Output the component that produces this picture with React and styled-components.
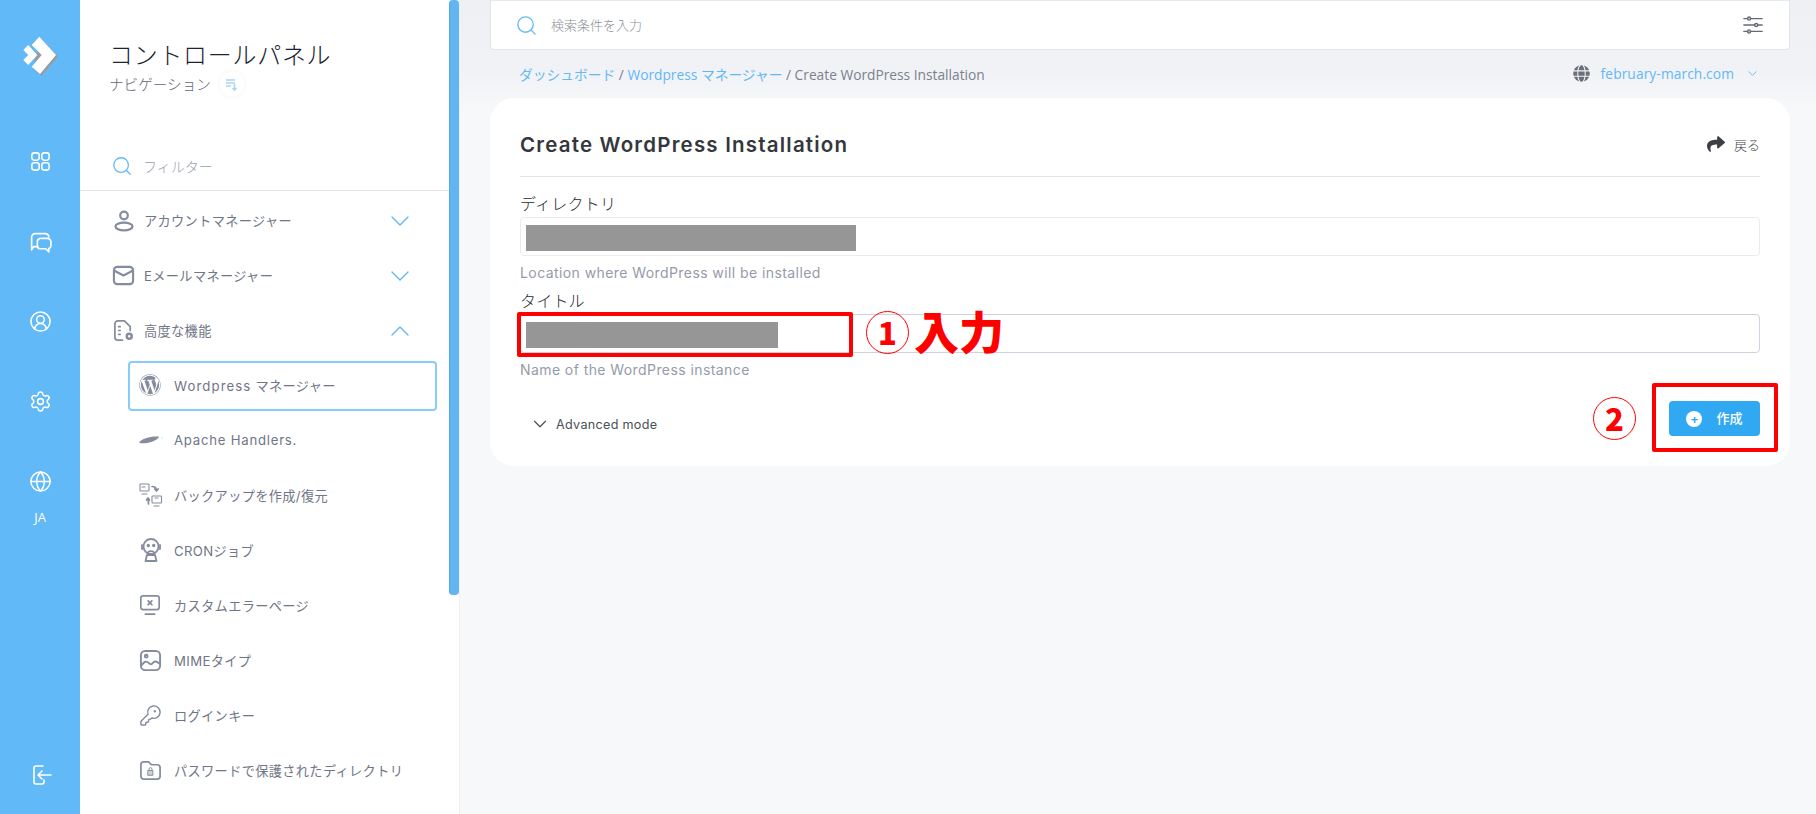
import React from "react";
import styled, { createGlobalStyle } from "styled-components";
import { FaWordpress, FaShare, FaGlobe } from "react-icons/fa";
import { ChevronDown, ChevronUp, Search, CircleUserRound, Settings, Globe, KeyRound } from "lucide-react";

const JP = `"Noto Sans CJK JP", sans-serif`;
const SANS = `Inter, "Noto Sans CJK JP", sans-serif`;
const OPEN = `"Open Sans", "Noto Sans CJK JP", sans-serif`;

const GlobalStyle = createGlobalStyle`
  html, body {
    margin: 0;
    height: 100%;
    background: #f7f8fa;
    overflow: hidden;
  }
  * { box-sizing: border-box; }
`;

const Page = styled.div`
  display: flex;
  width: 1816px;
  height: 814px;
  overflow: hidden;
`;

const Rail = styled.nav`
  width: 80px;
  flex-shrink: 0;
  background: #61b9f7;
  color: #fff;
  display: flex;
  flex-direction: column;
  align-items: center;
  padding-top: 34px;
`;

const RailLogo = styled.div`
  height: 93px;
`;

const RailItem = styled.div`
  height: 80px;
  display: flex;
  flex-direction: column;
  align-items: center;
  padding-top: 23px;
  gap: 15px;
`;

const RailLang = styled.span`
  font: 500 13px ${OPEN};
  line-height: 18px;
`;

const RailBottom = styled.div`
  margin-top: auto;
  padding: 0 0 23px 2px;
`;

const Sidebar = styled.aside`
  position: relative;
  width: 380px;
  flex-shrink: 0;
  background: #fff;
  border-right: 1px solid #eef0f3;
  overflow: hidden;
`;

const ScrollThumb = styled.div`
  position: absolute;
  top: 0;
  right: 0;
  width: 10px;
  height: 595px;
  background: #61b5f0;
  border-left: 1px solid #58a8e0;
  border-radius: 4px;
`;

const SideHead = styled.header`
  padding: 37px 0 0 29px;
  height: 142px;
`;

const SideTitle = styled.h1`
  margin: 0;
  font: 300 24px/34px ${JP};
  color: #1c2433;
  letter-spacing: 0.7px;
`;

const SideSub = styled.div`
  display: flex;
  align-items: center;
  gap: 8px;
  font: 300 14.6px/24px ${JP};
  color: #5f6673;
`;

const SubBadge = styled.span`
  width: 26px;
  height: 26px;
  border-radius: 50%;
  box-shadow: 0 0 3px rgba(120, 130, 150, 0.12);
  display: flex;
  align-items: center;
  justify-content: center;
`;

const Filter = styled.div`
  height: 49px;
  margin-right: 10px;
  padding-left: 31px;
  display: flex;
  align-items: center;
  gap: 10px;
  border-bottom: 1px solid #dfe5ec;
  color: #9aa0ad;
  font: 300 14px ${JP};
`;

const NavList = styled.ul`
  list-style: none;
  margin: 0;
  padding: 2px 0 0;
`;

const NavRow = styled.li`
  height: 55px;
  display: flex;
  align-items: center;
  padding-left: ${(p) => (p.$sub ? "59px" : "32px")};
  padding-right: 43px;
  padding-bottom: ${(p) => (p.$sub ? "1px" : "0")};
  font: 400 13.2px ${SANS};
  letter-spacing: 0.35px;
  color: #6f7686;
  position: relative;
`;

const NavIcon = styled.span`
  width: ${(p) => (p.$sub ? "35px" : "32px")};
  flex-shrink: 0;
  display: flex;
  align-items: center;
  color: #858c9f;
`;

const NavText = styled.span`
  flex: 1;
  white-space: nowrap;
`;

const WideLatin = styled.span`
  letter-spacing: ${(p) => p.$s}px;
`;

const ActiveBox = styled.div`
  position: absolute;
  left: 48px;
  right: 22px;
  top: 3px;
  bottom: 2px;
  border: 2px solid #88cdf9;
  border-radius: 4px;
`;

const Main = styled.main`
  flex: 1;
  padding: 0 26px 0 30px;
  background: linear-gradient(#eff0f3 0, #f1f2f5 70px, #f7f8fa 110px);
`;

const SearchBar = styled.div`
  height: 50px;
  background: #fff;
  border: 1px solid #dfe5ed;
  border-top-color: #e6ebf1;
  border-radius: 0 0 4px 4px;
  display: flex;
  align-items: center;
  padding: 0 25px 0 24px;
  gap: 13px;
`;

const SearchText = styled.span`
  flex: 1;
  padding-bottom: 2px;
  font: 300 13px ${JP};
  color: #8b8f98;
`;

const CrumbRow = styled.div`
  height: 47px;
  margin-bottom: 1px;
  padding: 0 30px 0 29px;
  display: flex;
  align-items: center;
  justify-content: space-between;
  font: 400 13.75px ${OPEN};
  color: #7b818d;
`;

const CrumbLink = styled.span`
  color: #63b8f5;
`;

const DomainPick = styled.div`
  display: flex;
  align-items: center;
  gap: 11px;
  color: #6a6f78;
`;

const DomainName = styled.span`
  color: #63b8f5;
  letter-spacing: 0.1px;
`;

const Card = styled.section`
  position: relative;
  background: #fff;
  border-radius: 24px;
  height: 368px;
  padding: 0 30px;
`;

const CardHead = styled.div`
  height: 79px;
  display: flex;
  align-items: center;
  justify-content: space-between;
  border-bottom: 1px solid #dfe5ec;
  padding-top: 14px;
`;

const CardTitle = styled.h2`
  margin: 0;
  font: 600 20.5px ${SANS};
  letter-spacing: 1.2px;
  color: #34373d;
`;

const BackLink = styled.div`
  display: flex;
  align-items: center;
  gap: 9px;
  font: 300 13px ${JP};
  color: #3b3f46;
`;

const Field = styled.div`
  height: 97px;
  padding-top: 13px;
`;

const FieldLabel = styled.label`
  display: block;
  font: 300 16px/27px ${JP};
  letter-spacing: 0.2px;
  color: #262a31;
  height: 27px;
`;

const InputBox = styled.div`
  height: 39px;
  border: 1px solid ${(p) => (p.$strong ? "#cfd3e0" : "#e8ebf0")};
  border-radius: 4px;
  padding: 7px 5px;
`;

const Redact = styled.div`
  width: ${(p) => p.$w}px;
  height: 26px;
  background: #969696;
`;

const FieldHelp = styled.div`
  font: 400 14px/17px ${SANS};
  letter-spacing: 0.42px;
  color: #959baa;
  margin-top: 8px;
`;

const CardFoot = styled.div`
  display: flex;
  align-items: center;
  justify-content: space-between;
  height: 35px;
  margin-top: 30px;
`;

const AdvancedToggle = styled.div`
  display: flex;
  align-items: center;
  gap: 5px;
  padding: 11px 0 0 9px;
  font: 400 12.6px ${SANS};
  letter-spacing: 0.3px;
  color: #4b4f57;
`;

const CreateButton = styled.button`
  width: 91px;
  height: 35px;
  border: 0;
  border-radius: 4px;
  background: #30a9f2;
  color: #fff;
  font: 500 13px ${JP};
  display: flex;
  align-items: center;
  justify-content: center;
  gap: 14px;
`;

const ButtonLabel = styled.span`
  padding-bottom: 3px;
`;

const PlusDot = styled.span`
  width: 16px;
  height: 16px;
  border-radius: 50%;
  background: #fff;
  color: #30a9f2;
  font: 700 13px/16px ${OPEN};
  text-align: center;
`;

const RedBox = styled.div`
  position: absolute;
  left: ${(p) => p.$l}px;
  top: ${(p) => p.$t}px;
  width: ${(p) => p.$w}px;
  height: ${(p) => p.$h}px;
  border: 4px solid #ff0000;
  border-radius: 2px;
`;

const RedNote = styled.div`
  position: absolute;
  left: ${(p) => p.$l}px;
  top: ${(p) => p.$t}px;
  display: flex;
  align-items: center;
  color: #ff0000;
  font: 900 45px/48px ${JP};
  white-space: nowrap;
`;

const RedNumber = styled.span`
  width: 43px;
  height: 43px;
  border: 1.5px solid #ff0000;
  border-radius: 50%;
  font: 900 31px/39px ${JP};
  text-align: center;
`;

const RedWord = styled.span`
  margin: -3px 0 0 5px;
`;

const Line = ({ size = 20, children, w = 1.6, color = "currentColor" }) => (
  <svg width={size} height={size} viewBox="0 0 24 24" fill="none" stroke={color} strokeWidth={w} strokeLinecap="round" strokeLinejoin="round">
    {children}
  </svg>
);

const Logo = () => (
  <svg width="40" height="44" viewBox="20 34 40 44">
    <path d="M41 38.500 L58 56.500 L41.500 76 L33 68.500 Z" fill="#9b9b9b" />
    <path d="M39.300 36.700 L56 55 L40 74 L31.700 66.700 L41.700 55 L31.700 45 Z" fill="#fff" />
    <path d="M23.300 50 L28.300 45 L37.300 55 L28.300 65 L23.300 60 L28.300 55 Z" fill="#fff" />
  </svg>
);

const GridIcon = () => (
  <Line size={23}>
    <rect x="3" y="3" width="7.600" height="7.600" rx="2.400" />
    <rect x="13.400" y="3" width="7.600" height="7.600" rx="2.400" />
    <rect x="3" y="13.400" width="7.600" height="7.600" rx="2.400" />
    <rect x="13.400" y="13.400" width="7.600" height="7.600" rx="2.400" />
  </Line>
);

const ChatIcon = () => (
  <Line size={25}>
    <path d="M9 16H5.500l-2 3V7a3.500 3.500 0 0 1 3.500-3.500h10A3.500 3.500 0 0 1 20 6.500" />
    <path d="M11.500 8h7A3.500 3.500 0 0 1 22 11.500V15a3 3 0 0 1-2 2.800V21l-3-3h-5a3 3 0 0 1-3-3v-3.500A3.500 3.500 0 0 1 11.500 8z" />
  </Line>
);

const ExitIcon = () => (
  <Line size={24}>
    <path d="M14 3H7a2 2 0 0 0-2 2v14a2 2 0 0 0 2 2h6a2 2 0 0 0 2-2v-2" />
    <path d="M22 12H9.500M13 8l-4 4 4 4" />
  </Line>
);

const PersonIcon = () => (
  <Line size={24} w={2.200}>
    <circle cx="12" cy="6.500" r="3.800" />
    <ellipse cx="12" cy="17.500" rx="8.500" ry="3.800" />
  </Line>
);

const MailIcon = () => (
  <Line size={23} w={2.200}>
    <rect x="2" y="3" width="20" height="18" rx="3.500" />
    <path d="M2.500 7 12 12l9.500-5" />
  </Line>
);

const AdvancedIcon = () => (
  <Line size={23} w={1.800}>
    <path d="M11 22H6a3 3 0 0 1-3-3V5a3 3 0 0 1 3-3h7l6 6v4" />
    <path d="M7 8h1.500M7 12h1.500M7 16h1.500" />
    <circle cx="18" cy="18" r="2.600" strokeWidth="2.600" />
  </Line>
);

const ApacheIcon = () => (
  <svg width="25" height="10" viewBox="0 0 25 10" fill="currentColor">
    <path d="M0 7.500C3 3.500 11 1 20 1.500c-.5 2.500-6 5.500-12 6.500-3 .5-6 .5-8-.5z" />
    <circle cx="23" cy="3" r="0.500" opacity="0.500" />
  </svg>
);

const BackupIcon = () => (
  <Line size={24} w={1.100}>
    <rect x="1" y="1" width="9" height="7" rx="0.800" />
    <path d="M3 11h5M3 4h3M16 15h3" />
    <rect x="13" y="13" width="9.500" height="7" rx="0.800" />
    <path d="M15 23h5" />
    <path d="M13 3.500c3 0 4.500 1 4.500 4M15.800 6l1.700 2 1.700-2M9.500 21c0-2.500 0-4-.5-5M7.500 17l1.500-2 1.500 2" strokeWidth="1.700" />
  </Line>
);

const CronIcon = () => (
  <Line size={24} w={1.800}>
    <circle cx="12" cy="8.500" r="7.500" />
    <path d="M3 7v4M21 7v4M6.500 23l1.500-6h8l1.500 6zM8.500 15c1-2.500 6-2.500 7 0" />
    <circle cx="9.300" cy="7.500" r="0.800" fill="currentColor" />
    <circle cx="14.700" cy="7.500" r="0.800" fill="currentColor" />
  </Line>
);

const ErrorPageIcon = () => (
  <Line size={22} w={1.800}>
    <rect x="2" y="2" width="20" height="15" rx="2.500" />
    <path d="M7 22h10M10 7.500l4 4M14 7.500l-4 4" strokeWidth="2" />
  </Line>
);

const ImageIcon = () => (
  <Line size={23} w={2}>
    <rect x="2" y="2" width="20" height="20" rx="4.500" />
    <circle cx="7.500" cy="7.500" r="1.500" />
    <path d="M3 16.500c3-4 5-4 7-2s3 2 4.500 0 3.500-2 6.500.500" />
  </Line>
);

const LockFolderIcon = () => (
  <Line size={23} w={1.800}>
    <path d="M5 3h5l3 3h6a3 3 0 0 1 3 3v9a3 3 0 0 1-3 3H5a3 3 0 0 1-3-3V6a3 3 0 0 1 3-3z" />
    <rect x="9.500" y="12" width="5" height="5" fill="currentColor" fillOpacity="0.400" strokeWidth="1" />
    <path d="M10.500 12v-1.500a1.500 1.500 0 0 1 3 0V12" strokeWidth="1" />
  </Line>
);

const SliderIcon = () => (
  <Line size={22} w={1.500} color="#666a71">
    <path d="M2 5h4.500M9 5h13M2 12h12M17 12h5M2 19h4.500M9 19h13" />
    <circle cx="7.700" cy="5" r="1.700" />
    <circle cx="15.500" cy="12" r="1.700" />
    <circle cx="7.700" cy="19" r="1.700" />
  </Line>
);

const SortIcon = () => (
  <svg width="13" height="13" viewBox="0 0 13 13" fill="none" stroke="#a5d7f9" strokeWidth="1.600">
    <path d="M1 2h9M1 5h9M1 8h5M9.500 6v6M7.500 10l2 2 2-2" />
  </svg>
);

const subItems = [
  { label: <WideLatin $s={0.75}>Apache Handlers.</WideLatin>, key: "apache", icon: <ApacheIcon /> },
  { label: "バックアップを作成/復元", key: "backup", icon: <BackupIcon /> },
  { label: "CRONジョブ", key: "cron", icon: <CronIcon /> },
  { label: "カスタムエラーページ", key: "errors", icon: <ErrorPageIcon /> },
  { label: "MIMEタイプ", key: "mime", icon: <ImageIcon /> },
  { label: "ログインキー", key: "keys", icon: <KeyRound size={23} strokeWidth={1.500} /> },
  { label: "パスワードで保護されたディレクトリ", key: "password", icon: <LockFolderIcon /> },
];

const NavChevron = ({ up }) => {
  const Icon = up ? ChevronUp : ChevronDown;
  return <Icon size={32} color="#63b8f5" strokeWidth={1} />;
};

export default function App() {
  return (
    <Page>
      <GlobalStyle />
      <Rail>
        <RailLogo>
          <Logo />
        </RailLogo>
        <RailItem>
          <GridIcon />
        </RailItem>
        <RailItem>
          <ChatIcon />
        </RailItem>
        <RailItem>
          <CircleUserRound size={23} strokeWidth={1.600} />
        </RailItem>
        <RailItem>
          <Settings size={23} strokeWidth={1.600} />
        </RailItem>
        <RailItem>
          <Globe size={23} strokeWidth={1.600} />
          <RailLang>JA</RailLang>
        </RailItem>
        <RailBottom>
          <ExitIcon />
        </RailBottom>
      </Rail>

      <Sidebar>
        <SideHead>
          <SideTitle>コントロールパネル</SideTitle>
          <SideSub>
            ナビゲーション
            <SubBadge>
              <SortIcon />
            </SubBadge>
          </SideSub>
        </SideHead>
        <Filter>
          <Search size={22} color="#63b8f5" strokeWidth={1.400} />
          フィルター
        </Filter>
        <NavList>
          <NavRow>
            <NavIcon>
              <PersonIcon />
            </NavIcon>
            <NavText>アカウントマネージャー</NavText>
            <NavChevron />
          </NavRow>
          <NavRow>
            <NavIcon>
              <MailIcon />
            </NavIcon>
            <NavText>Eメールマネージャー</NavText>
            <NavChevron />
          </NavRow>
          <NavRow>
            <NavIcon>
              <AdvancedIcon />
            </NavIcon>
            <NavText>高度な機能</NavText>
            <NavChevron up />
          </NavRow>
          <NavRow $sub>
            <ActiveBox />
            <NavIcon $sub>
              <FaWordpress size={22} />
            </NavIcon>
            <NavText>
              <WideLatin $s={1.1}>Wordpress</WideLatin> マネージャー
            </NavText>
          </NavRow>
          {subItems.map((item) => (
            <NavRow $sub key={item.key}>
              <NavIcon $sub>{item.icon}</NavIcon>
              <NavText>{item.label}</NavText>
            </NavRow>
          ))}
        </NavList>
        <ScrollThumb />
      </Sidebar>

      <Main>
        <SearchBar>
          <Search size={23} color="#63b8f5" strokeWidth={1.400} />
          <SearchText>検索条件を入力</SearchText>
          <SliderIcon />
        </SearchBar>
        <CrumbRow>
          <span>
            <CrumbLink>ダッシュボード</CrumbLink> / <CrumbLink>Wordpress マネージャー</CrumbLink> / Create WordPress Installation
          </span>
          <DomainPick>
            <FaGlobe size={17} />
            <DomainName>february-march.com</DomainName>
            <ChevronDown size={15} color="#63b8f5" strokeWidth={1.400} />
          </DomainPick>
        </CrumbRow>
        <Card>
          <CardHead>
            <CardTitle>Create WordPress Installation</CardTitle>
            <BackLink>
              <FaShare size={18} />
              戻る
            </BackLink>
          </CardHead>
          <Field>
            <FieldLabel>ディレクトリ</FieldLabel>
            <InputBox>
              <Redact $w={330} />
            </InputBox>
            <FieldHelp>Location where WordPress will be installed</FieldHelp>
          </Field>
          <Field>
            <FieldLabel>タイトル</FieldLabel>
            <InputBox $strong>
              <Redact $w={252} />
            </InputBox>
            <FieldHelp>Name of the WordPress instance</FieldHelp>
          </Field>
          <CardFoot>
            <AdvancedToggle>
              <ChevronDown size={22} strokeWidth={1.300} />
              Advanced mode
            </AdvancedToggle>
            <CreateButton>
              <PlusDot>+</PlusDot>
              <ButtonLabel>作成</ButtonLabel>
            </CreateButton>
          </CardFoot>
          <RedBox $l={27} $t={214} $w={336} $h={45} />
          <RedNote $l={376} $t={212}>
            <RedNumber>1</RedNumber>
            <RedWord>入力</RedWord>
          </RedNote>
          <RedBox $l={1162} $t={285} $w={126} $h={69} />
          <RedNote $l={1103} $t={299}>
            <RedNumber>2</RedNumber>
          </RedNote>
        </Card>
      </Main>
    </Page>
  );
}
